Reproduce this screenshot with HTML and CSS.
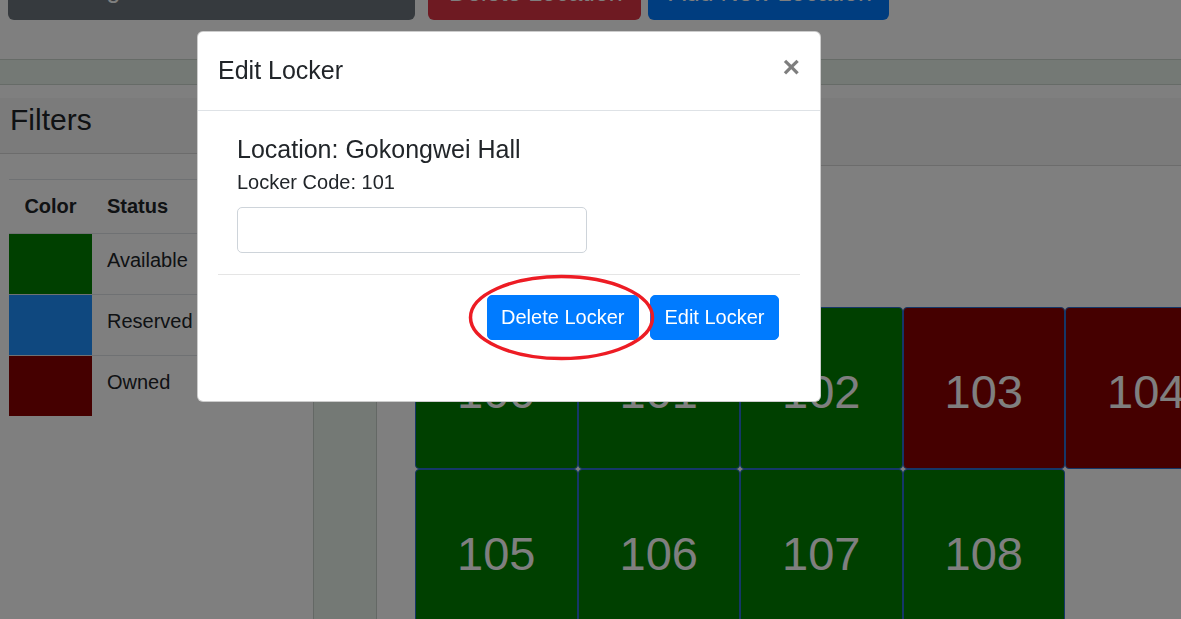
FILE: index.html
```html
<!DOCTYPE html>
<html lang="en">
<head>
<meta charset="utf-8">
<title>Edit Locker</title>
<link rel="stylesheet" href="styles.css">
</head>
<body>
<div class="page">
  <div class="toolbar">
    <button class="tbtn tbtn-secondary">Manage Locations</button>
    <button class="tbtn tbtn-danger">Delete Location</button>
    <button class="tbtn tbtn-primary">Add New Location</button>
  </div>
  <div class="band"></div>
  <div class="main">
    <aside class="filters">
      <div class="card-header filters-header"><h4 class="filters-title">Filters</h4></div>
      <div class="filters-body">
        <table class="legend">
          <thead>
            <tr><th class="col-color">Color</th><th>Status</th></tr>
          </thead>
          <tbody>
            <tr><td class="swatch green"></td><td>Available</td></tr>
            <tr><td class="swatch blue"></td><td>Reserved</td></tr>
            <tr><td class="swatch red"></td><td>Owned</td></tr>
          </tbody>
        </table>
      </div>
    </aside>
    <section class="lockers">
      <div class="card-header lockers-header"></div>
      <div class="lockers-body">
        <div class="strip"></div>
        <div class="grid">
          <div class="locker green">100</div>
          <div class="locker green">101</div>
          <div class="locker green">102</div>
          <div class="locker red">103</div>
          <div class="locker red">104</div>
          <div class="locker green">105</div>
          <div class="locker green">106</div>
          <div class="locker green">107</div>
          <div class="locker green">108</div>
        </div>
      </div>
    </section>
  </div>
</div>

<div class="backdrop"></div>

<div class="modal">
  <div class="modal-header">
    <h5 class="modal-title">Edit Locker</h5>
    <button class="close" aria-label="Close">&times;</button>
  </div>
  <div class="modal-body">
    <div class="info">
      <h5 class="location">Location: Gokongwei Hall</h5>
      <p class="code">Locker Code: 101</p>
      <input class="field" type="text">
    </div>
    <hr class="divider">
    <div class="actions">
      <button class="btn">Delete Locker</button>
      <button class="btn">Edit Locker</button>
    </div>
  </div>
</div>

<svg class="annotation" width="1181" height="619" viewBox="0 0 1181 619">
  <ellipse cx="561.5" cy="317.5" rx="91" ry="41" fill="none" stroke="#ed1c24" stroke-width="3.5"/>
</svg>
</body>
</html>
```

FILE: styles.css
```css
* { box-sizing: border-box; }

html, body {
  margin: 0;
  height: 100%;
  overflow: hidden;
}

body {
  font-family: "Liberation Sans", Arial, sans-serif;
  font-size: 20px;
  line-height: 1.5;
  color: #212529;
  background: #fff;
}

.page { width: 1300px; }

/* top toolbar (scrolled partly off screen) */
.toolbar {
  display: flex;
  align-items: flex-start;
  height: 60px;
  margin-top: -40px;
  padding-left: 8px;
}

.tbtn {
  height: 60px;
  border: 1px solid transparent;
  border-radius: 6px;
  font-family: inherit;
  font-size: 25px;
  line-height: 37.5px;
  padding: 12.5px 20px 7.5px;
  color: #fff;
  white-space: nowrap;
}

.tbtn-secondary {
  width: 407px;
  background: #6c757d;
  text-align: left;
  padding: 9.5px 20px 10.5px 35px;
}

.tbtn-danger {
  width: 213px;
  margin-left: 13px;
  background: #dc3545;
}

.tbtn-primary {
  width: 241px;
  margin-left: 7px;
  background: #007bff;
}

.band {
  margin-top: 39px;
  height: 26px;
  background: #e8f2ea;
  border-top: 1px solid #ccd6ce;
  border-bottom: 1px solid #ccd6ce;
}

.main {
  margin-top: 13px;
  display: flex;
  align-items: flex-start;
}

.card-header {
  background: rgba(0, 0, 0, .03);
  border-bottom: 1px solid rgba(0, 0, 0, .125);
}

/* filters */
.filters {
  width: 300px;
  flex: none;
}

.filters-header {
  height: 56px;
  padding: 4px 10px 0;
}

.filters-title {
  margin: 0;
  font-size: 30px;
  font-weight: 500;
  line-height: 36px;
}

.filters-body {
  padding: 25px 10px 0 9px;
}

.legend {
  border-collapse: collapse;
  width: 281px;
}

.legend th,
.legend td {
  border-top: 1px solid #dee2e6;
  line-height: 30px;
  text-align: left;
  vertical-align: top;
}

.legend th {
  padding: 11px 15px 12px;
  font-weight: bold;
}

.legend th.col-color {
  width: 83px;
  text-align: center;
}

.legend td {
  padding: 11px 15px 19px;
}

.legend td.swatch { padding: 0; }

.green { background: green; }
.blue { background: dodgerblue; }
.red { background: darkred; }

/* lockers */
.lockers {
  flex: 1;
}

.lockers-header {
  height: 68px;
}

.lockers-body {
  display: flex;
  align-items: flex-start;
}

.strip {
  flex: none;
  width: 64px;
  height: 600px;
  margin-left: 13px;
  background: #e8f2ea;
  border-left: 1px solid #c8d0ca;
  border-right: 1px solid #c8d0ca;
}

.grid {
  margin-left: 38px;
  margin-top: 141px;
  display: grid;
  grid-template-columns: repeat(5, 162.5px);
  grid-auto-rows: 162px;
}

.locker {
  display: flex;
  align-items: center;
  justify-content: center;
  padding-top: 6px;
  border: 1px solid #2a6fd0;
  border-radius: 4px;
  color: #fff;
  font-size: 47px;
  line-height: normal;
}

/* modal */
.backdrop {
  position: fixed;
  inset: 0;
  background: rgba(0, 0, 0, .5);
}

.modal {
  position: fixed;
  left: 197px;
  top: 31px;
  width: 624px;
  background: #fff;
  border: 1px solid rgba(0, 0, 0, .2);
  border-radius: 6px;
}

.modal-header {
  display: flex;
  justify-content: space-between;
  align-items: flex-start;
  padding: 20px;
  border-bottom: 1px solid #dee2e6;
}

.modal-title {
  margin: 0;
  font-size: 25px;
  font-weight: 500;
  line-height: 37.5px;
}

.close {
  padding: 0;
  margin: 0;
  border: 0;
  background: none;
  font-family: inherit;
  font-size: 30px;
  font-weight: 700;
  line-height: 30px;
  color: #000;
  opacity: .5;
}

.modal-body {
  padding: 20px;
}

.info {
  padding: 3px 19px 0;
}

.location {
  margin: 0 0 3px;
  font-size: 25px;
  font-weight: 500;
  line-height: 30px;
}

.code {
  margin: 0 0 10.5px;
  line-height: 30px;
}

.field {
  display: block;
  width: 350px;
  height: 46px;
  border: 1px solid #ced4da;
  border-radius: 5px;
  background: #fff;
}

.divider {
  margin: 21px 0 20px;
  border: 0;
  border-top: 1px solid rgba(0, 0, 0, .1);
}

.actions {
  display: flex;
  justify-content: flex-end;
  gap: 11px;
  padding-right: 21px;
  margin-bottom: 41px;
}

.btn {
  height: 45px;
  padding: 0 13.5px;
  border: 1px solid #007bff;
  border-radius: 5px;
  background: #007bff;
  color: #fff;
  font-family: inherit;
  font-size: 20px;
  line-height: 43px;
}

.annotation {
  position: fixed;
  left: 0;
  top: 0;
  pointer-events: none;
}
```
